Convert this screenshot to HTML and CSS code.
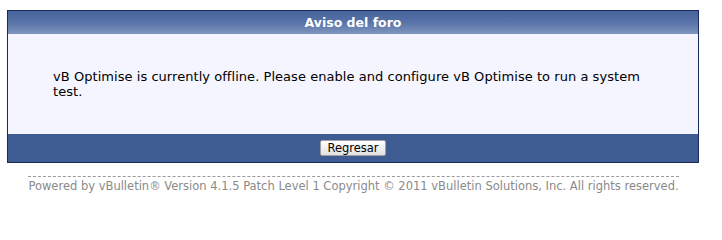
FILE: index.html
```html
<!DOCTYPE html>
<html>
<head>
<meta charset="utf-8">
<link rel="stylesheet" href="styles.css">
</head>
<body>
<div class="page">
  <div class="block">
    <h2 class="blockhead">Aviso del foro</h2>
    <div class="blockbody">
      <p class="message">vB Optimise is currently offline. Please enable and configure vB Optimise to run a system test.</p>
    </div>
    <div class="blockfoot">
      <button class="button" type="button">Regresar</button>
    </div>
  </div>
  <div class="below">
    <p class="copyright">Powered by vBulletin® Version 4.1.5 Patch Level 1 Copyright © 2011 vBulletin Solutions, Inc. All rights reserved.</p>
  </div>
</div>
</body>
</html>
```

FILE: styles.css
```css
html, body {
  margin: 0;
  padding: 0;
  background: #ffffff;
}
body {
  font-family: "DejaVu Sans", Verdana, sans-serif;
}
.page {
  padding: 10px 23px 0 7px;
}
.block {
  border: 1px solid #1a2a5a;
  background: #f5f5ff;
}
.blockhead {
  margin: 0;
  height: 23px;
  line-height: 23px;
  text-align: center;
  font-size: 12.5px;
  font-weight: bold;
  color: #ffffff;
  background: linear-gradient(to bottom, #46629b 0%, #5873a8 50%, #8096be 100%);
}
.blockbody {
  padding: 35px 45px 35px 45px;
}
.message {
  margin: 0;
  font-size: 13px;
  letter-spacing: 0.05px;
  line-height: 15px;
  color: #000000;
}
.blockfoot {
  background: #3e5c92;
  height: 28px;
  display: flex;
  align-items: center;
  justify-content: center;
}
.button {
  font-family: "DejaVu Sans", Verdana, sans-serif;
  font-size: 11.5px;
  height: 16px;
  line-height: 14px;
  padding: 0 6px;
  color: #000;
  border: 1px solid #a0a0a0;
  border-radius: 2px;
  background: linear-gradient(to bottom, #ffffff, #e2e2e2);
}
.below {
  margin: 13px 20px 0 21px;
  border-top: 1px dashed #9a9a9a;
  text-align: center;
}
.copyright {
  margin: 2px 0 0 0;
  font-size: 11.5px;
  color: #8a8a8a;
}
```
